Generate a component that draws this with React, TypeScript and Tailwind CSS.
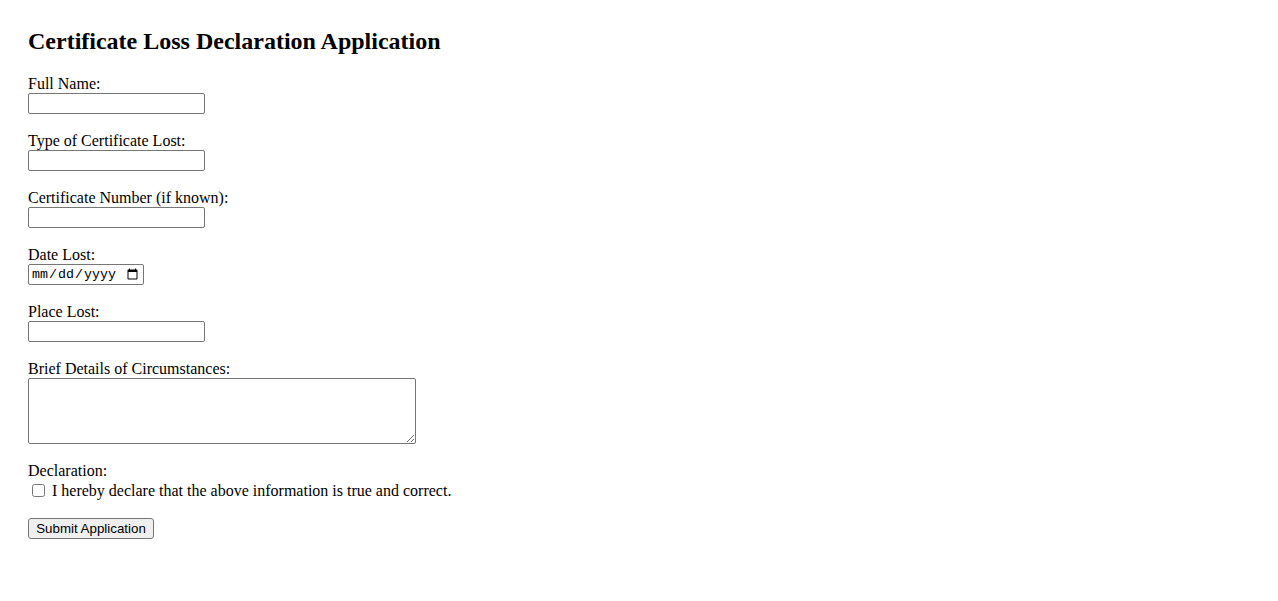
import { type FC } from 'react';

const TEXT_FIELDS = [
  { id: 'fullName', label: 'Full Name:' },
  { id: 'certType', label: 'Type of Certificate Lost:' },
  { id: 'certNumber', label: 'Certificate Number (if known):' },
];

const inputBox =
  'h-[21px] border border-[#767676] rounded-[2px] bg-white px-[2px] text-[13.33px] font-["Liberation_Sans",Arial,sans-serif]';

const App: FC = () => {
  return (
    <div className='min-h-screen bg-white px-[28px] pt-[27px] text-[16px] text-black font-["Liberation_Serif","Times_New_Roman",serif]'>
      <h2 className="mb-[20px] text-[24px] font-bold leading-[28px]">Certificate Loss Declaration Application</h2>

      <form className="flex flex-col items-start" onSubmit={(event) => event.preventDefault()}>
        {TEXT_FIELDS.map((field) => (
          <div key={field.id} className="mb-[18px] flex flex-col items-start">
            <label htmlFor={field.id} className="leading-[18px]">{field.label}</label>
            <input id={field.id} type="text" className={`${inputBox} w-[177px]`} />
          </div>
        ))}

        <div className="mb-[18px] flex flex-col items-start">
          <label htmlFor="dateLost" className="leading-[18px]">Date Lost:</label>
          <input
            id="dateLost"
            type="date"
            className='h-[21px] w-[116px] border border-[#767676] rounded-[2px] bg-white pl-[2px] pr-[2px] text-[13.33px] font-["Liberation_Mono","Courier_New",monospace]'
          />
        </div>

        <div className="mb-[18px] flex flex-col items-start">
          <label htmlFor="placeLost" className="leading-[18px]">Place Lost:</label>
          <input id="placeLost" type="text" className={`${inputBox} w-[177px]`} />
        </div>

        <div className="mb-[18px] flex flex-col items-start">
          <label htmlFor="details" className="leading-[18px]">Brief Details of Circumstances:</label>
          <textarea
            id="details"
            className='h-[66px] w-[388px] border border-[#767676] rounded-[2px] bg-white p-[2px] text-[13.33px] font-["Liberation_Mono",monospace]'
          />
        </div>

        <div className="mb-[17px] flex flex-col items-start">
          <span className="leading-[18px]">Declaration:</span>
          <label className="flex h-[21px] items-center">
            <input type="checkbox" className="m-0 ml-[4px] mr-[3px] h-[13px] w-[13px]" />
            <span className="ml-[4px] leading-[18px]">I hereby declare that the above information is true and correct.</span>
          </label>
        </div>

        <button
          type="submit"
          className='h-[21px] w-[126px] border border-[#767676] rounded-[3px] bg-[#efefef] text-center text-[13.33px] leading-[19px] text-black font-["Liberation_Sans",Arial,sans-serif]'
        >
          Submit Application
        </button>
      </form>
    </div>
  );
};

export default App;
